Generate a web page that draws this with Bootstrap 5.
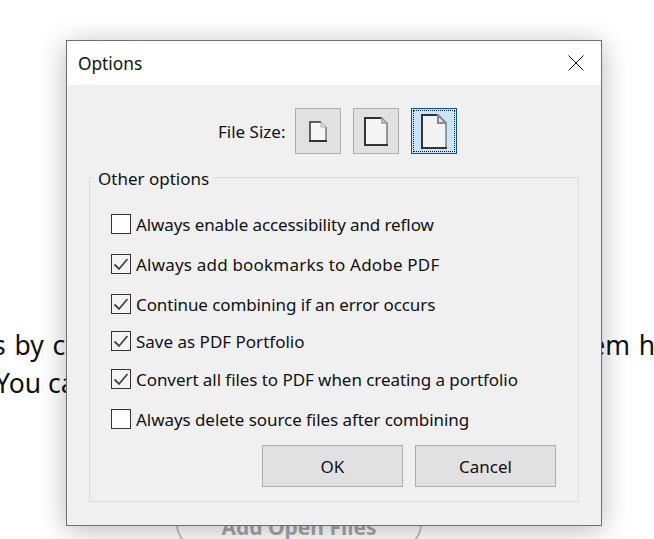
<!DOCTYPE html>
<html lang="en">
<head>
<meta charset="utf-8">
<title>Options</title>
<link href="https://cdn.jsdelivr.net/npm/bootstrap@5.3.0/dist/css/bootstrap.min.css" rel="stylesheet">
<style>
html,body{height:100%;}
body{background:#fff;color:#111;font-family:"Noto Sans","Open Sans","Liberation Sans",sans-serif;overflow:hidden;position:relative;}
.page-back{height:539px;padding-top:326px;}
.back-line{font-size:26.500px;line-height:38px;white-space:nowrap;overflow:hidden;}
.line-a{text-indent:-103px;word-spacing:1.900px;}
.line-b{text-indent:-5px;}
.add-open{width:246px;height:50px;margin:97px 0 0 176px;border:2px solid #c4c4c4;border-radius:25px;color:#a8a8a8;font-weight:700;font-size:21px;line-height:52px;text-align:center;}
.dlg{position:absolute;left:66px;top:40px;width:536px;height:486px;background:#f0f0f0;border:1px solid #6f6f6f;box-shadow:0 4px 26px rgba(0,0,0,.28);font-size:17px;line-height:22px;}
.dlg-title{height:44px;background:#fff;padding:0 17px 0 11px;}
.dlg-name{font-size:17.300px;padding-top:2px;}
.size-row{height:46px;margin-top:23px;padding-left:151px;gap:12px;}
.size-label{flex:none;width:65px;white-space:nowrap;padding-top:2px;}
.size-btn{width:46px;height:46px;padding:0;border:1px solid #adadad;border-radius:0;background:#e1e1e1;}
.size-btn.on{background:#cce4f7;border-color:#005499;outline:1px dotted #111;outline-offset:-3px;}
.group-box{position:relative;margin:23px 22px 0 22px;height:325px;border:1px solid #dcdcdc;padding:36px 0 0 21px;}
.group-name{position:absolute;left:4px;top:-10px;padding:0 4px;background:#f0f0f0;font-size:17px;}
.opt{height:20px;gap:5px;margin-bottom:20px;}
.opt.tight-a{margin-bottom:17px;}
.opt.tight-b{margin-bottom:18px;}
.opt .form-check-input{width:20px;height:20px;margin:0;flex:none;border:1px solid #333;border-radius:0;background-color:#fff;box-shadow:none;}
.opt .form-check-input:checked{background-color:#f4f4f4;border-color:#333;background-size:20px 20px;background-image:url("data:image/svg+xml,%3Csvg xmlns='http://www.w3.org/2000/svg' viewBox='0 0 20 20'%3E%3Cpath d='M3.500 10.500l4.500 4.500 8.500-10' fill='none' stroke='%23444' stroke-width='1.800'/%3E%3C/svg%3E");}
.opt label{white-space:nowrap;padding-top:2px;}
.fit-a{letter-spacing:-.1px;}
.fit-b{letter-spacing:.2px;}
.fit-c{letter-spacing:-.06px;}
.act-row{position:absolute;left:172px;top:267px;gap:12px;}
.act-btn{width:141px;height:42px;padding:2px 0 0;border:1px solid #adadad;border-radius:0;background:#e1e1e1;color:#111;font-size:17px;}
.act-btn:hover{background:#e1e1e1;border-color:#adadad;color:#111;}
</style>
</head>
<body>
<div class="page-back">
  <div class="back-line line-a">Add files by clicking Add Files, or just drag and drop them here.</div>
  <div class="back-line line-b">You can reorder them before you combine.</div>
  <div class="add-open">Add Open Files</div>
</div>

<div class="dlg" role="dialog" aria-label="Options">
  <div class="dlg-title d-flex align-items-center justify-content-between">
    <span class="dlg-name">Options</span>
    <svg width="16" height="16" viewBox="0 0 16 16" aria-hidden="true"><path d="M.5.5l15 15M15.500.5l-15 15" stroke="#111" stroke-width="1" fill="none"/></svg>
  </div>
  <div class="size-row d-flex align-items-center">
    <span class="size-label">File Size:</span>
    <button type="button" class="btn size-btn d-flex align-items-center justify-content-center" aria-label="Small">
      <svg width="18" height="21" viewBox="0 0 18 21"><path d="M1 1h11l5 5v14H1z" fill="#f6f6f6"/><path d="M1 20V1h11" fill="none" stroke="#333" stroke-width="1.500"/><path d="M0 20h18" stroke="#333" stroke-width="2"/><path d="M17 6v13" stroke="#777" stroke-width="1.500"/><path d="M12 1l5 5h-5z" fill="#e6e6e6" stroke="#aaa"/></svg>
    </button>
    <button type="button" class="btn size-btn d-flex align-items-center justify-content-center" aria-label="Medium">
      <svg width="24" height="29" viewBox="0 0 24 29"><path d="M1 1h17l5 5v22H1z" fill="#f4f4f4"/><path d="M1 28V1h17" fill="none" stroke="#333" stroke-width="2"/><path d="M0 28h24" stroke="#333" stroke-width="2"/><path d="M23 6v21" stroke="#777" stroke-width="1.500"/><path d="M18 1l5 5h-5z" fill="#e6e6e6" stroke="#999" stroke-width="1.500"/></svg>
    </button>
    <button type="button" class="btn size-btn on d-flex align-items-center justify-content-center" aria-label="Large">
      <svg width="26" height="35" viewBox="0 0 26 35"><path d="M1 1h16l8 8v25H1z" fill="#f2f2f2"/><path d="M1 34V1h16" fill="none" stroke="#333" stroke-width="2"/><path d="M0 34h26" stroke="#333" stroke-width="2"/><path d="M25 9v24" stroke="#777" stroke-width="1.500"/><path d="M17 1l8 8h-8z" fill="#e6e6e6" stroke="#888" stroke-width="2"/></svg>
    </button>
  </div>
  <div class="group-box">
    <div class="group-name">Other options</div>
    <div class="opt d-flex align-items-center"><input class="form-check-input" type="checkbox" id="c1"><label class="fit-a" for="c1">Always enable accessibility and reflow</label></div>
    <div class="opt d-flex align-items-center"><input class="form-check-input" type="checkbox" id="c2" checked><label class="fit-b" for="c2">Always add bookmarks to Adobe PDF</label></div>
    <div class="opt tight-a d-flex align-items-center"><input class="form-check-input" type="checkbox" id="c3" checked><label class="fit-a" for="c3">Continue combining if an error occurs</label></div>
    <div class="opt tight-b d-flex align-items-center"><input class="form-check-input" type="checkbox" id="c4" checked><label for="c4">Save as PDF Portfolio</label></div>
    <div class="opt d-flex align-items-center"><input class="form-check-input" type="checkbox" id="c5" checked><label class="fit-c" for="c5">Convert all files to PDF when creating a portfolio</label></div>
    <div class="opt d-flex align-items-center"><input class="form-check-input" type="checkbox" id="c6"><label class="fit-c" for="c6">Always delete source files after combining</label></div>
    <div class="act-row d-flex">
      <button type="button" class="btn act-btn">OK</button>
      <button type="button" class="btn act-btn">Cancel</button>
    </div>
  </div>
</div>
</body>
</html>
